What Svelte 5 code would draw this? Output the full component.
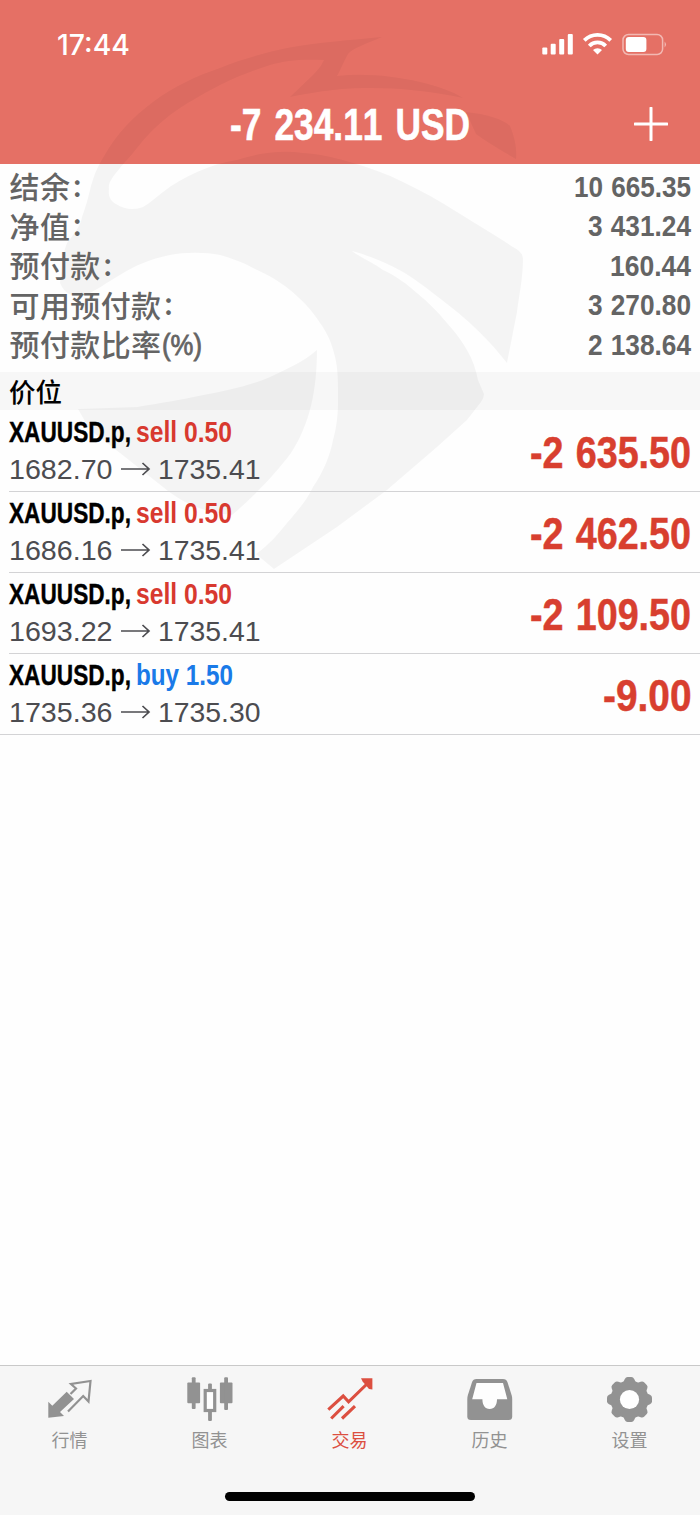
<script>
  const summary = [
    { label: '结余', colon: true, value: '10 665.35', width: 117 },
    { label: '净值', colon: true, value: '3 431.24', width: 103 },
    { label: '预付款', colon: true, value: '160.44', width: 81 },
    { label: '可用预付款', colon: true, value: '3 270.80', width: 103 },
    { label: '预付款比率', colon: false, value: '2 138.64', width: 103 }
  ];
  const positions = [
    { side: 'sell', lots: '0.50', sideWidth: 96, open: '1682.70', now: '1735.41', profit: '-2 635.50', width: 161 },
    { side: 'sell', lots: '0.50', sideWidth: 96, open: '1686.16', now: '1735.41', profit: '-2 462.50', width: 161 },
    { side: 'sell', lots: '0.50', sideWidth: 96, open: '1693.22', now: '1735.41', profit: '-2 109.50', width: 161 },
    { side: 'buy', lots: '1.50', sideWidth: 97, open: '1735.36', now: '1735.30', profit: '-9.00', width: 88.5 }
  ];
  const tabs = [
    { id: 'quotes', label: '行情' },
    { id: 'chart', label: '图表' },
    { id: 'trade', label: '交易' },
    { id: 'history', label: '历史' },
    { id: 'settings', label: '设置' }
  ];
</script>

<!-- Text condensed to a fixed width; the baseline sits at `base` inside a box of height `h` -->
{#snippet fit(text, width, h, base, cls)}
  <svg class="fit {cls}" {width} height={h}>
    <text x="0" y={base} textLength={width} lengthAdjust="spacingAndGlyphs">{text}</text>
  </svg>
{/snippet}

<div class="screen">
  <svg class="emblem" width="700" height="600" viewBox="0 0 700 600" aria-hidden="true">
    <path d="M60 283C62 268 62 255 67 243C74 234 81 225 82 217C86 206 88 198 90 190C95 171 99 165 103 158C117 133 133 117 153 102C173 87 196 76 220 68C242 59 264 53 287 48C318 42 352 40 382 37C366 44 353 48 348 54C343 63 341 69 337 76C365 73 393 76 420 82C437 86 452 91 463 98C430 91 400 88 370 88C350 88 330 89 290 97L313 75C320 68 322 64 324 60C302 59 286 60 270 65C252 71 236 77 220 85C201 95 185 104 170 115C157 125 146 136 137 148C129 158 124 163 120 168C113 177 108 182 109 189C108 197 111 201 116 204C125 210 135 210 143 207C150 203 156 197 163 192C173 184 184 178 197 172C210 166 223 162 237 160C258 153 281 150 303 153C320 154 337 158 353 163C371 168 387 174 403 182C422 191 440 201 457 212C478 225 498 237 513 247Q523 252 523 259C523 278 519 296 517 312L507 363C501 356 496 349 490 343C477 329 463 316 447 304C433 293 418 281 403 272C387 263 370 256 352 251C363 259 374 263 383 270C396 276 407 284 417 293C429 303 438 312 447 323C456 333 462 341 467 350C473 360 476 370 478 380L484 394Q484 398 481 402L467 420L437 447L387 490L337 527L274 569L256 554C269 545 279 533 287 523C300 508 308 498 313 487C324 471 330 455 333 440C337 426 338 413 338 400C338 382 338 369 335 357C332 344 328 334 320 323C312 310 301 299 290 290C278 280 266 274 253 268C242 262 231 258 220 255C204 252 186 252 170 255C150 259 134 266 120 275C106 283 96 291 83 296C74 297 65 295 60 283Z" />
    <path d="M317 350C303 362 287 369 270 377C249 386 226 391 203 395C180 400 160 403 137 407L78 409L90 430L120 453L168 491C185 504 206 513 232 515C250 500 274 476 291 453C310 424 317 390 317 350Z" />
    <path d="M466 112C486 114 503 119 510 126C515 138 517 150 516 159C500 150 484 140 476 134Z" />
  </svg>

  <header class="top">
    <div class="status">
      {@render fit('17:44', 73, 30, 25, 'clock')}
      <svg class="signals" width="126" height="24" viewBox="0 0 126 24" aria-hidden="true">
        <g fill="#fff">
          <rect x="1.3" y="15.6" width="5" height="7" rx="1" />
          <rect x="9.7" y="11.8" width="5" height="10.8" rx="1" />
          <rect x="18.2" y="7" width="5" height="15.6" rx="1" />
          <rect x="26.8" y="2" width="5" height="20.6" rx="1" />
        </g>
        <g fill="none" stroke="#fff" stroke-width="3.8">
          <path d="M43.3 8.4A18.6 18.6 0 0 1 69.7 8.4" />
          <path d="M48.3 14A11.2 11.2 0 0 1 64.7 14" />
        </g>
        <path d="M52 18.1A6.3 6.3 0 0 1 61 18.1L56.5 22.6Z" fill="#fff" />
        <rect x="82" y="2.5" width="39.6" height="20" rx="5.5" fill="none" stroke="#fff" stroke-opacity=".5" stroke-width="1.5" />
        <rect x="84.8" y="5" width="20.6" height="15" rx="3" fill="#fff" />
        <path d="M123.6 9.5Q126.4 12.5 123.6 15.5Z" fill="#fff" fill-opacity=".5" />
      </svg>
    </div>
    <div class="title">
      <span></span>
      {@render fit('-7 234.11 USD', 240, 44, 37, 'total')}
      <svg class="plus" width="34" height="34" viewBox="0 0 34 34" aria-hidden="true">
        <path d="M17 1V33M1 17H33" stroke="#fff" stroke-width="3" stroke-linecap="round" />
      </svg>
    </div>
  </header>

  <section class="summary">
    {#each summary as row}
      <div class="line">
        <div class="label">
          <span>{row.label}</span>
          {#if row.colon}
            <span class="colon">:</span>
          {:else}
            {@render fit('(%)', 40, 32, 27, 'unit')}
          {/if}
        </div>
        {@render fit(row.value, row.width, 32, 25.7, 'figure')}
      </div>
    {/each}
  </section>

  <h2>价位</h2>

  <ul class="positions">
    {#each positions as p}
      <li>
        <div class="deal">
          <div class="name">
            {@render fit('XAUUSD.p,', 122, 36, 31, 'symbol')}
            {@render fit(`${p.side} ${p.lots}`, p.sideWidth, 36, 31, p.side)}
          </div>
          <div class="prices">
            {@render fit(p.open, 103.5, 34, 32, 'price')}
            <svg class="arrow" width="30" height="34" viewBox="0 0 30 34" aria-label="→">
              <path d="M0 22H27.5M21.5 16L28 22L21.5 28" fill="none" stroke="#4c4c50" stroke-width="1.7" />
            </svg>
            {@render fit(p.now, 102.5, 34, 32, 'price')}
          </div>
        </div>
        {@render fit(p.profit, p.width, 80, 57, 'profit')}
      </li>
    {/each}
  </ul>

  <nav>
    <div class="tabs">
      {#each tabs as tab}
        <div class="tab" class:active={tab.id === 'trade'}>
          <svg width="48" height="48" viewBox="0 0 48 48" aria-hidden="true">
            {#if tab.id === 'quotes'}
              <path d="M2.3 41.8V25.7L6.3 29.7L20.7 15.7L28 23L14 36L18 39.9Z" fill="currentColor" />
              <path d="M24.5 18L30 12.5L25 8L44.5 5L42.5 25.5L37.2 20L22 35.5" fill="none" stroke="currentColor" stroke-width="2.2" />
            {:else if tab.id === 'chart'}
              <g fill="currentColor">
                <rect x="1.3" y="6.6" width="12.8" height="20.6" rx="1" />
                <rect x="5.8" y="1.3" width="3.8" height="31.8" rx="1" />
                <rect x="33.9" y="6.6" width="12.6" height="20.6" rx="1" />
                <rect x="38.2" y="1.3" width="3.8" height="32.8" rx="1" />
                <rect x="22.1" y="7.4" width="3.8" height="7" rx="1" />
                <rect x="22.1" y="35" width="3.8" height="10" rx="1" />
              </g>
              <rect x="19.2" y="14.5" width="9.5" height="20" fill="#fefefe" stroke="currentColor" stroke-width="3.2" />
            {:else if tab.id === 'trade'}
              <path d="M2.3 33.6L17.2 20L22.6 25.8L43 6M5.2 42.5L17.6 30.2M16 42.5L29 30.2" fill="none" stroke="currentColor" stroke-width="3.1" />
              <path d="M35 2.3H46.4V13.6L43 13L36.6 5.6Z" fill="currentColor" />
            {:else if tab.id === 'history'}
              <path d="M10.5 3H37Q40.4 3 41.4 6L45.6 19Q46.2 21 46.2 23V40.5Q46.2 44 42.7 44H4.8Q1.3 44 1.3 40.5V23Q1.3 21 1.9 19L6.1 6Q7.1 3 10.5 3Z" fill="currentColor" />
              <path d="M10.5 6.9H37L41.3 23.3H31C31 29 28.5 33 23.7 33S16.4 29 16.4 23.3H6.2Z" fill="#fefefe" />
            {:else}
              <circle cx="23.5" cy="23.5" r="19" fill="currentColor" />
              {#each [0, 45, 90, 135, 180, 225, 270, 315] as angle}
                <path d="M16.5 8L18.8 3Q19.8 1 21.6 1H25.4Q27.2 1 28.2 3L30.5 8Z" transform="rotate({angle} 23.5 23.5)" fill="currentColor" />
              {/each}
              <circle cx="23.5" cy="23.5" r="9.6" fill="#fefefe" />
            {/if}
          </svg>
          <span>{tab.label}</span>
        </div>
      {/each}
    </div>
    <div class="home"></div>
  </nav>
</div>

<style>
  :global(body) { margin: 0; }
  .screen {
    position: relative;
    isolation: isolate;
    display: flex;
    flex-direction: column;
    width: 700px;
    height: 1515px;
    overflow: hidden;
    background: linear-gradient(#e57065 164px, #fefefe 164px, #fefefe 372px, #f7f7f7 372px, #f7f7f7 410px, #fefefe 410px);
    font-family: 'Liberation Sans', 'Noto Sans CJK SC', sans-serif;
  }
  .emblem { position: absolute; inset: 0; z-index: -1; fill: rgba(0, 0, 0, 0.041); }
  .fit { display: block; flex: none; overflow: visible; font-weight: 700; font-kerning: none; }
  .top { height: 164px; }
  .status {
    display: flex;
    justify-content: space-between;
    height: 76px;
    box-sizing: border-box;
    padding: 30px 33px 0 57px;
  }
  .clock { fill: #fff; font: 500 28px Inter, sans-serif; }
  .signals { margin-top: 2px; }
  .title {
    display: grid;
    grid-template-columns: 1fr 240px 1fr;
    padding: 27px 32px 0;
  }
  .total { fill: #fff; font-size: 43.5px; word-spacing: 4px; stroke: #fff; stroke-width: 0.6; }
  .plus { justify-self: end; margin-top: 4px; }
  .summary { height: 208px; box-sizing: border-box; padding-top: 3px; }
  .line {
    display: flex;
    justify-content: space-between;
    align-items: center;
    height: 39.5px;
    padding: 0 9px 0 9.5px;
  }
  .label {
    display: flex;
    align-items: center;
    margin-top: -2px;
    color: #646464;
    font: 500 30px/39px 'Noto Sans CJK SC', sans-serif;
    letter-spacing: 0.4px;
  }
  .colon { margin: -3px 0 0 2.5px; }
  .unit { fill: #646464; font: 400 29px 'Liberation Sans', sans-serif; stroke: #646464; stroke-width: 0.8; letter-spacing: 0; }
  .figure { fill: #646464; font-size: 29.5px; word-spacing: 1px; }
  h2 {
    height: 39px;
    margin: 0;
    padding-left: 9px;
    color: #000;
    font: 500 26.5px/37px 'Noto Sans CJK SC', sans-serif;
  }
  .positions { margin: 0; padding: 0; list-style: none; }
  li {
    display: flex;
    justify-content: space-between;
    height: 80px;
    margin-left: 9px;
    padding-right: 9px;
    border-bottom: 1px solid #d3d3d5;
  }
  li:last-child { margin-left: 0; padding-left: 9px; }
  .name { display: flex; gap: 5px; }
  .symbol { fill: #000; font-size: 29px; stroke: #000; stroke-width: 0.4; }
  .sell, .buy { font-size: 29px; }
  .sell { fill: #d8392f; }
  .buy { fill: #1a7ae8; }
  .prices { display: flex; }
  .price { fill: #4c4c50; font-size: 28.5px; font-weight: 400; }
  .arrow { margin: 0 7px 0 8px; }
  .profit { fill: #d83f2f; font-size: 43.5px; word-spacing: 2px; stroke: #d83f2f; stroke-width: 0.5; }
  nav {
    display: flex;
    flex-direction: column;
    justify-content: space-between;
    height: 149px;
    margin-top: auto;
    border-top: 1px solid #c9c9c9;
    background: #f6f6f6;
  }
  .tabs { display: flex; padding-top: 10px; }
  .tab {
    display: flex;
    flex: 1;
    flex-direction: column;
    align-items: center;
    color: #929292;
    font: 400 18px/26px 'Noto Sans CJK SC', sans-serif;
  }
  .tab span { margin: 2px 1px 0 0; }
  .active { color: #dc4f40; }
  .home {
    align-self: center;
    width: 250px;
    height: 9px;
    margin-bottom: 14px;
    border-radius: 5px;
    background: #000;
  }
</style>
